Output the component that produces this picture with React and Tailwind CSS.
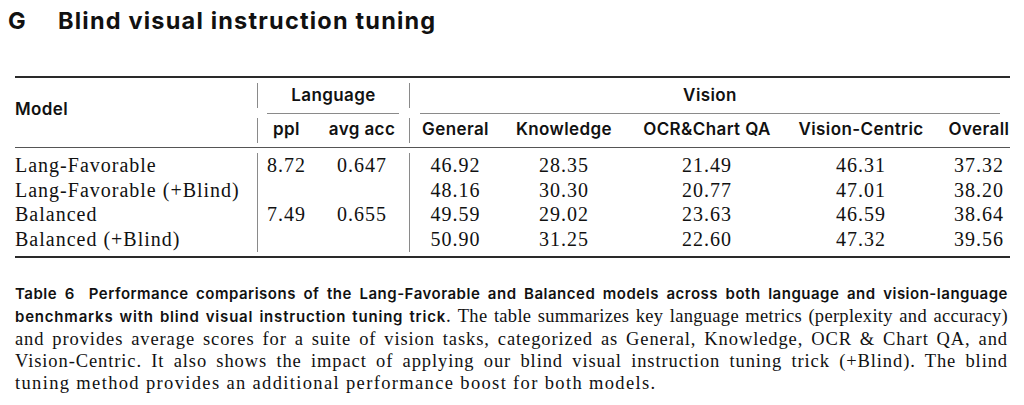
const rows = [
  { model: "Lang-Favorable", ppl: "8.72", acc: "0.647", v: ["46.92", "28.35", "21.49", "46.31", "37.32"] },
  { model: "Lang-Favorable (+Blind)", ppl: "", acc: "", v: ["48.16", "30.30", "20.77", "47.01", "38.20"] },
  { model: "Balanced", ppl: "7.49", acc: "0.655", v: ["49.59", "29.02", "23.63", "46.59", "38.64"] },
  { model: "Balanced (+Blind)", ppl: "", acc: "", v: ["50.90", "31.25", "22.60", "47.32", "39.56"] },
];

const rowStart = ["row-start-1", "row-start-2", "row-start-3", "row-start-4"];
const visionCols = ["col-start-6", "col-start-7", "col-start-8", "col-start-9", "col-start-10 pl-[13px]"];

const cols = "grid grid-cols-[242px_1px_57px_94px_1px_91px_126px_160px_148px_75px]";
const sans = "[font-family:Inter,'Open_Sans',sans-serif]";
const serif = "[font-family:'Liberation_Serif',serif]";

const ResultsTable = () => (
  <div className="ml-[15px] mt-[40px] w-[995px]">
    <div className="h-[1.5px] bg-[#2a2a2a]" />

    {/* header */}
    <div className={`${cols} grid-rows-[35px_1px_33px] ${sans} font-semibold text-[17px] tracking-[0.4px] text-[#111]`}>
      <div className="col-start-1 row-start-1 row-span-3 flex items-center pb-[5px]">Model</div>
      <div className="col-start-2 row-start-1 my-[5px] bg-[#8a8a8a]" />
      <div className="col-start-3 col-span-2 row-start-1 flex items-center justify-center pt-[1px]">Language</div>
      <div className="col-start-5 row-start-1 my-[5px] bg-[#8a8a8a]" />
      <div className="col-start-6 col-span-5 row-start-1 flex items-center justify-center pt-[1px]">Vision</div>

      <div className="col-start-3 col-span-2 row-start-2 ml-[9px] mr-[10px] bg-[#8a8a8a]" />
      <div className="col-start-6 col-span-5 row-start-2 ml-[10px] mr-[10px] bg-[#8a8a8a]" />

      <div className="col-start-2 row-start-3 my-[4px] bg-[#8a8a8a]" />
      <div className="col-start-3 row-start-3 flex items-center justify-center">ppl</div>
      <div className="col-start-4 row-start-3 flex items-center justify-center">avg acc</div>
      <div className="col-start-5 row-start-3 my-[4px] bg-[#8a8a8a]" />
      <div className="col-start-6 row-start-3 flex items-center justify-center">General</div>
      <div className="col-start-7 row-start-3 flex items-center justify-center">Knowledge</div>
      <div className="col-start-8 row-start-3 flex items-center justify-center">OCR&amp;Chart QA</div>
      <div className="col-start-9 row-start-3 flex items-center justify-center">Vision-Centric</div>
      <div className="col-start-10 row-start-3 flex items-center justify-center pl-[13px]">Overall</div>
    </div>

    <div className="h-[1px] bg-[#555]" />

    {/* body */}
    <div className={`${cols} grid-rows-[repeat(4,24.7px)] pt-[5.5px] pb-[4.5px] ${serif} text-[20px] leading-[24.7px] tracking-[1px] text-[#111]`}>
      <div className="col-start-2 row-start-1 row-span-4 -mt-[0.5px] -mb-[0.5px] bg-[#8a8a8a]" />
      <div className="col-start-5 row-start-1 row-span-4 -mt-[0.5px] -mb-[0.5px] bg-[#8a8a8a]" />
      {rows.map((r, i) => (
        <div key={r.model} className="contents">
          <div className={`col-start-1 ${rowStart[i]}`}>{r.model}</div>
          <div className={`col-start-3 ${rowStart[i]} text-center`}>{r.ppl}</div>
          <div className={`col-start-4 ${rowStart[i]} text-center`}>{r.acc}</div>
          {r.v.map((val, j) => (
            <div key={j} className={`${visionCols[j]} ${rowStart[i]} text-center`}>
              {val}
            </div>
          ))}
        </div>
      ))}
    </div>

    <div className="h-[1.5px] bg-[#2a2a2a]" />
  </div>
);

const Caption = () => {
  const line = "whitespace-nowrap text-justify [text-align-last:justify]";
  const bold = `${sans} font-semibold text-[15px]`;
  return (
    <div className={`ml-[15px] mt-[25px] w-[993px] ${serif} text-[18.5px] leading-[22px] tracking-[0.9px] text-[#111]`}>
      <div className={`${line} ${bold} tracking-[0.5px]`}>
        <span className="mr-[14px]">Table 6</span>Performance comparisons of the Lang-Favorable and Balanced models across both language and vision-language
      </div>
      <div className={`${line} tracking-[0.3px]`}>
        <span className={`${bold} tracking-[0.8px]`}>benchmarks with blind visual instruction tuning trick.</span>{" "}
        The table summarizes key language metrics (perplexity and accuracy)
      </div>
      <div className={line}>
        and provides average scores for a suite of vision tasks, categorized as General, Knowledge, OCR &amp; Chart QA, and
      </div>
      <div className={line}>
        Vision-Centric. It also shows the impact of applying our blind visual instruction tuning trick (+Blind). The blind
      </div>
      <div className="tracking-[1.35px]">tuning method provides an additional performance boost for both models.</div>
    </div>
  );
};

export default function App() {
  return (
    <div className="w-[1024px] h-[405px] overflow-hidden bg-white text-black">
      <div className={`flex pl-[8px] pt-[6px] ${sans} font-bold text-[23.5px] leading-[30px] tracking-[1.2px] text-[#111]`}>
        <span className="w-[50px]">G</span>
        <span>Blind visual instruction tuning</span>
      </div>
      <ResultsTable />
      <Caption />
    </div>
  );
}
